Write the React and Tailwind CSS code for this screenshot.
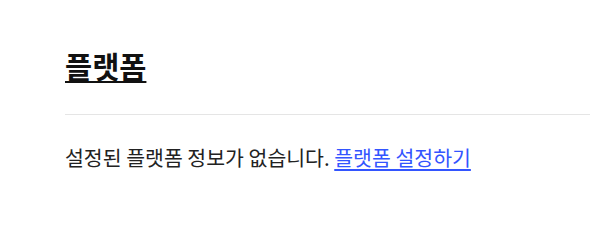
export default function App() {
  return (
    <div className="min-h-[244px] bg-white pl-[65px] pt-[44px]" style={{ fontFamily: '"Noto Sans CJK KR", "Noto Sans", sans-serif' }}>
      <h1 className="text-[29.5px] font-semibold leading-[42px] text-[#111]">
        <a href="#" className="underline decoration-[2px] underline-offset-[3px]">플랫폼</a>
      </h1>
      <hr className="mt-[28px] border-t border-[#e5e5e5]" />
      <p className="mt-[28px] text-[20.5px] leading-[28px] text-[#222]">
        설정된 플랫폼 정보가 없습니다.{' '}
        <a href="#" className="text-[#3355ff] underline underline-offset-[3px]">플랫폼 설정하기</a>
      </p>
    </div>
  );
}
